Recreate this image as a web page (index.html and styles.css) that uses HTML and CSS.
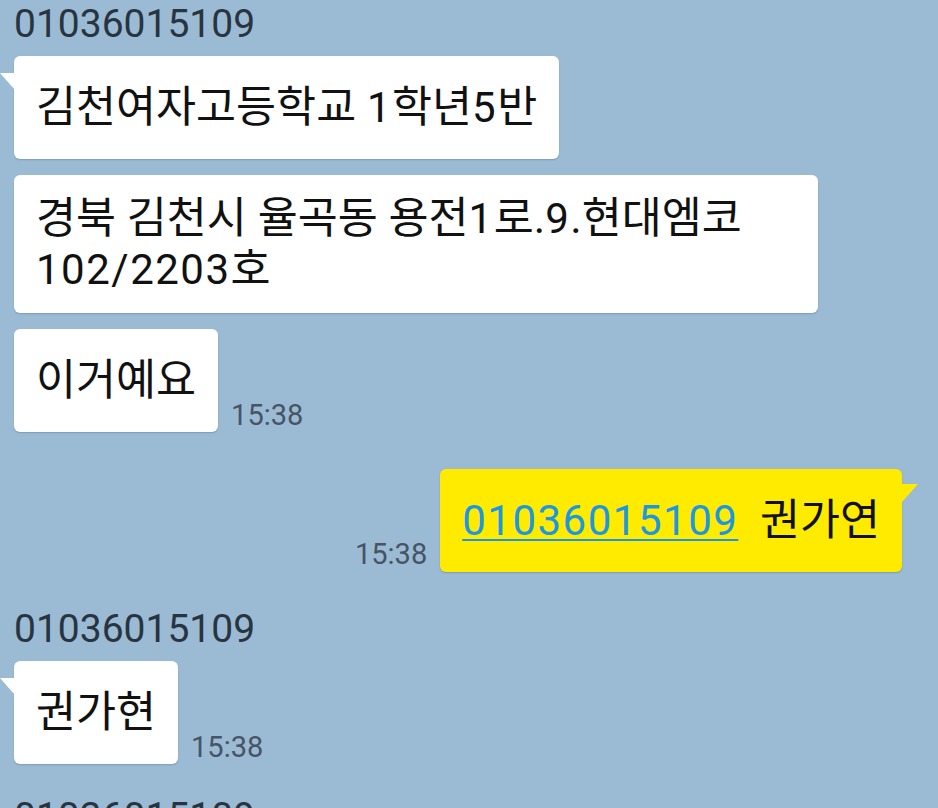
FILE: index.html
```html
<!DOCTYPE html>
<html lang="ko">
<head>
<meta charset="utf-8">
<title>Chat</title>
<link rel="stylesheet" href="styles.css">
</head>
<body>
<div class="chat">
  <div class="group">
    <div class="name">01036015109</div>
    <div class="row">
      <div class="bubble tail"><p class="txt">김천여자고등학교 <span class="num">1</span>학년<span class="num">5</span>반</p></div>
    </div>
    <div class="row">
      <div class="bubble"><p class="txt">경북 김천시 율곡동 용전<span class="num">1</span>로.<span class="num">9</span>.현대엠코 <span class="num">102/2203</span>호</p></div>
    </div>
    <div class="row">
      <div class="bubble"><p class="txt">이거예요</p></div>
      <span class="time">15:38</span>
    </div>
  </div>

  <div class="row me">
    <span class="time">15:38</span>
    <div class="bubble yellow tail"><p class="txt"><a class="link num" href="#">01036015109</a>&nbsp; 권가연</p></div>
  </div>

  <div class="group after-me">
    <div class="name">01036015109</div>
    <div class="row">
      <div class="bubble tail"><p class="txt">권가현</p></div>
      <span class="time">15:38</span>
    </div>
  </div>

  <div class="group last">
    <div class="name">01036015109</div>
  </div>
</div>
</body>
</html>
```

FILE: styles.css
```css
html, body {
  margin: 0;
  padding: 0;
  background: #9bbbd4;
}

.chat {
  height: 808px;
  overflow: hidden;
  box-sizing: border-box;
  padding: 2px 36px 0 14px;
  font-family: Roboto, "Noto Sans CJK KR", sans-serif;
  display: flex;
  flex-direction: column;
}

.group {
  flex: none;
}

.name {
  font-size: 39px;
  line-height: 44px;
  color: #28343f;
  margin-bottom: 10px;
}

.row {
  display: flex;
  align-items: flex-end;
  flex: none;
}

.row + .row {
  margin-top: 16px;
}

.row.me {
  justify-content: flex-end;
  margin-top: 37px;
}

.group.after-me {
  margin-top: 35px;
}

.group.last {
  margin-top: 31px;
}

.bubble {
  position: relative;
  box-sizing: border-box;
  max-width: 804px;
  min-height: 103px;
  display: flex;
  align-items: center;
  padding: 18px 22px;
  background: #ffffff;
  border-radius: 6px;
  box-shadow: 0 1px 1.5px rgba(40, 60, 80, 0.25);
  color: #111111;
}

.txt {
  margin: 0;
  font-size: 43.5px;
  line-height: 51px;
  word-break: keep-all;
}

.bubble.tail::before {
  content: "";
  position: absolute;
  left: -14px;
  top: 17px;
  width: 15px;
  height: 17px;
  background: #ffffff;
  clip-path: polygon(0 0, 100% 0, 100% 100%);
}

.bubble.yellow {
  background: #ffeb00;
}

.bubble.yellow.tail::before {
  left: auto;
  right: -16px;
  top: 15px;
  width: 17px;
  height: 19px;
  background: #ffeb00;
  clip-path: polygon(0 0, 100% 0, 0 100%);
}

.num {
  font-size: 42px;
  letter-spacing: 1.5px;
}

.link {
  color: #1b98e0;
  text-decoration: underline;
  text-decoration-thickness: 2px;
  text-underline-offset: 4px;
}

.time {
  font-size: 29px;
  line-height: 32px;
  color: #465465;
  margin: 0 0 1px 13px;
  white-space: nowrap;
}

.row.me .time {
  margin: 0 13px 2px 0;
}
```
